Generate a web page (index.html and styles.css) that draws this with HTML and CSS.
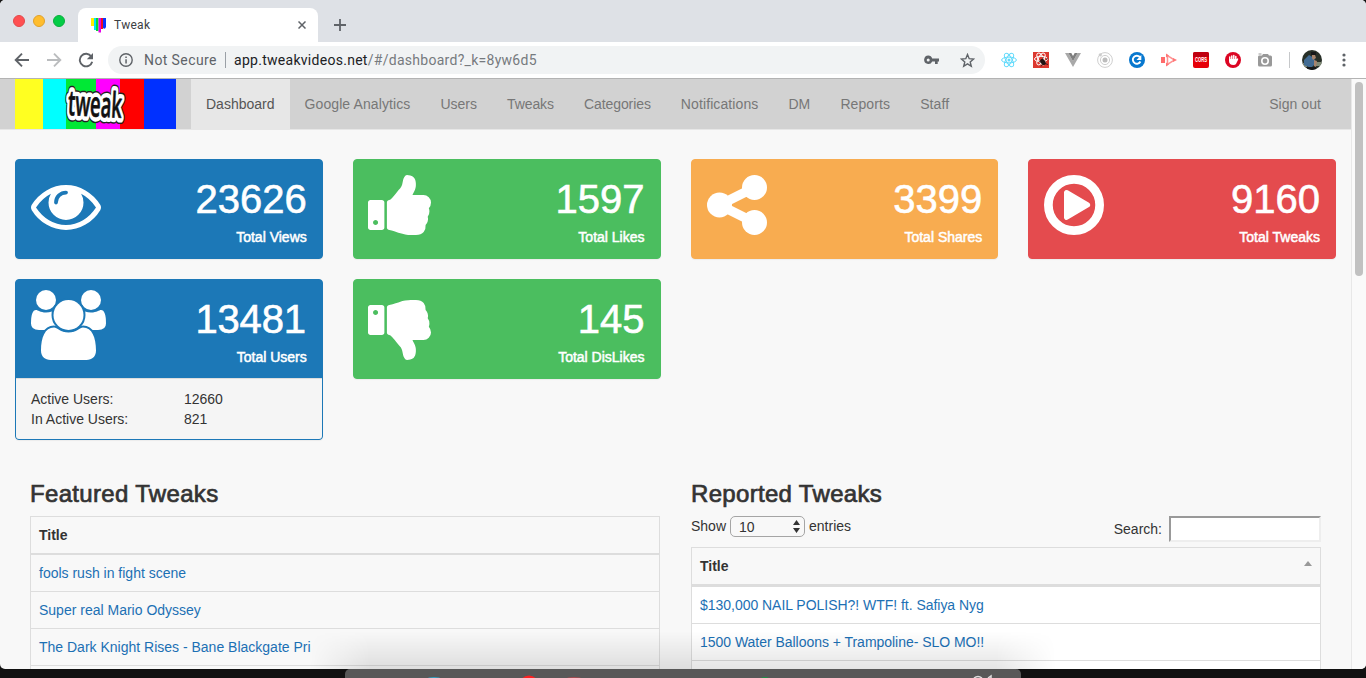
FILE: index.html
```html
<!DOCTYPE html>
<html lang="en">
<head>
<meta charset="utf-8">
<title>Tweak</title>
<link rel="stylesheet" href="styles.css">
</head>
<body>
<div class="window">
  <div class="tabstrip">
    <div class="lights"><i class="light red"></i><i class="light amber"></i><i class="light green"></i></div>
    <div class="tab">
      <svg class="favicon" width="15" height="15" viewBox="0 0 15 15"><path fill="#ffee00" d="M0 0h3v8H0z"/><path fill="#00dfff" d="M3 0h2v12H3z"/><path fill="#00d936" d="M5 0h2.500v13H5z"/><path fill="#e600e8" d="M7.500 0H10v14.500H7.500z"/><path fill="#f01020" d="M10 0h2v11h-2z"/><path fill="#0836ff" d="M12 0h3v9q-1 3-3 1z"/></svg>
      <span class="tab-title">Tweak</span>
      <svg class="tab-close" width="8" height="8" viewBox="0 0 8 8"><path d="M.5.500l7 7m0-7l-7 7" stroke="#5f6368" stroke-width="1.500"/></svg>
    </div>
    <svg class="newtab" width="12" height="12" viewBox="0 0 12 12"><path d="M6 0v12M0 6h12" stroke="#5f6368" stroke-width="1.800"/></svg>
  </div>
  <div class="toolbar">
    <svg class="nav-icon" width="16" height="16" viewBox="0 0 16 16" fill="none" stroke="#5f6368" stroke-width="1.900"><path d="M15 8H2.500M8 1.700L1.700 8 8 14.300"/></svg>
    <svg class="nav-icon" width="16" height="16" viewBox="0 0 16 16" fill="none" stroke="#babcbe" stroke-width="1.900"><path d="M1 8h12.500M8 1.700L14.300 8 8 14.300"/></svg>
    <svg class="nav-icon" width="16" height="16" viewBox="0 0 16 16"><path d="M13.300 4.500A6.300 6.300 0 1 0 14.200 9.700" fill="none" stroke="#5f6368" stroke-width="1.900"/><path d="M15 1v6.200H8.800z" fill="#5f6368"/></svg>
    <div class="omnibox">
      <svg width="14" height="14" viewBox="0 0 14 14"><circle cx="7" cy="7" r="6.200" fill="none" stroke="#5f6368" stroke-width="1.400"/><path d="M6.300 6.200h1.500v4.300H6.300zM6.300 3.500h1.500v1.500H6.300z" fill="#5f6368"/></svg>
      <span class="insecure">Not Secure</span>
      <i class="url-sep"></i>
      <span class="url"><b>app.tweakvideos.net</b>/#/dashboard?_k=8yw6d5</span>
      <svg class="key" width="15" height="10" viewBox="0 0 15 10"><path fill="#5f6368" fill-rule="evenodd" d="M4.200.600a4.100 4.100 0 0 1 4 2.900H15v3h-1.300V9H11V6.500H8.200A4.200 4.200 0 1 1 4.200.600zm0 2.800a1.500 1.500 0 1 0 0 3 1.500 1.500 0 0 0 0-3z"/></svg>
      <svg class="star" width="15" height="15" viewBox="0 0 15 15"><path d="M7.500 1.500l1.700 4.200 4.400.300-3.400 2.900 1.100 4.400-3.800-2.400-3.800 2.400 1.100-4.400L1.400 6l4.400-.300z" fill="none" stroke="#5f6368" stroke-width="1.400"/></svg>
    </div>
    <div class="extensions">
      <svg width="16" height="16" viewBox="0 0 16 16" fill="none" stroke="#61dafb"><ellipse cx="8" cy="8" rx="7.400" ry="2.900"/><ellipse cx="8" cy="8" rx="7.400" ry="2.900" transform="rotate(60 8 8)"/><ellipse cx="8" cy="8" rx="7.400" ry="2.900" transform="rotate(120 8 8)"/><circle cx="8" cy="8" r="1.500" fill="#61dafb" stroke="none"/></svg>
      <svg width="16" height="16" viewBox="0 0 16 16"><path fill="#dc382f" d="M0 0h16v16H0z"/><g fill="none" stroke="#fff"><ellipse cx="8" cy="7" rx="6.500" ry="2.700"/><ellipse cx="8" cy="7" rx="6.500" ry="2.700" transform="rotate(60 8 7)"/><ellipse cx="8" cy="7" rx="6.500" ry="2.700" transform="rotate(120 8 7)"/></g><ellipse cx="10" cy="10" rx="2.300" ry="3.500" fill="#231414" transform="rotate(-35 10 10)"/><path d="M6 9.500l4 1m-2 4l2-3m2 0l3 1m-2-5l2-1m-5 0l0-1.500" stroke="#231414" stroke-width=".8"/></svg>
      <svg width="16" height="16" viewBox="0 0 16 16"><path fill="#a9a9a9" d="M0 1h3.300L8 9.200 12.700 1H16L8 15z"/><path fill="#7f7f7f" d="M3.300 1h3L8 4l1.700-3h3L8 9.200z"/></svg>
      <svg width="16" height="16" viewBox="0 0 16 16" fill="none" stroke="#cfcfcf"><circle cx="8" cy="8" r="7.400"/><circle cx="8" cy="8" r="4.600"/><circle cx="8" cy="8" r="2.500" fill="#bdbdbd" stroke="none"/><circle cx="3.300" cy="2.800" r="1.600" fill="#ccc" stroke="none"/></svg>
      <svg width="16" height="16" viewBox="0 0 16 16"><circle cx="8" cy="8" r="8" fill="#0878cf"/><path d="M11.400 9.500A4 4 0 1 1 10.800 5" fill="none" stroke="#fff" stroke-width="1.900"/><path d="M12.300 3v5H7.500z" fill="#fff"/></svg>
      <svg width="16" height="16" viewBox="0 0 16 16"><path fill="#ff6b6b" d="M0 5h4v6H0z"/><path d="M6.500 8V3.500l7 4.500-7 4.500z" fill="none" stroke="#ff9292" stroke-width="1.500"/><path fill="#ff7777" d="M5 1.500l3 2-3 2zM5 10.500l3 2-3 2zM12 6l4 2-4 2z"/></svg>
      <svg class="cors-icon" width="16" height="16" viewBox="0 0 16 16"><rect width="16" height="16" rx="2" fill="#e60009"/><path d="M2 0h12a2 2 0 0 1 2 2v3H0V2a2 2 0 0 1 2-2z" fill="#bf0010"/><text x="2" y="10.300" class="cors" textLength="12" lengthAdjust="spacingAndGlyphs">CORS</text></svg>
      <svg width="16" height="16" viewBox="0 0 16 16"><circle cx="8" cy="8" r="8" fill="#dc0523"/><path d="M4.800 8V5m2-1v4m2-4.500V8m2-3.500V9" stroke="#fff" stroke-width="1.500" stroke-linecap="round"/><path fill="#fff" d="M4 7h7.500l1-.800q1.200 0 .600 1.500L11 12q-.700 1-2.500 1-4.500 0-4.500-4z"/></svg>
      <svg width="16" height="16" viewBox="0 0 16 16"><path fill="#999" fill-rule="evenodd" d="M2 3.500h3L6 2h5l1 1.500h1.500q1.500 0 1.500 1.500v8q0 1.500-1.500 1.500h-11Q1 14.500 1 13V5q0-1.500 1-1.500zM8 5a4 4 0 1 0 0 8 4 4 0 0 0 0-8zm0 1.600a2.400 2.400 0 1 1 0 4.800 2.400 2.400 0 0 1 0-4.800z"/><path fill="#999" d="M1.500 1.500h3v1h-3z"/></svg>
    </div>
    <i class="bar-sep"></i>
    <svg class="avatar" width="20" height="20" viewBox="0 0 20 20"><defs><clipPath id="face"><circle cx="10" cy="10" r="10"/></clipPath></defs><g clip-path="url(#face)"><path fill="#283028" d="M0 0h20v20H0z"/><path fill="#818b77" d="M12 12h8v4h-8zM0 13h5v4H0z"/><path fill="#416b93" d="M2 10l5-5 5 3 2 5-5 5-7-3z"/><path fill="#a8846c" d="M10 5h3l1 3-3 2-1-2zM12 10l3 1-1 6-2-1z"/><path fill="#17191a" d="M9 2h5v3H9zM5 17l9 0v3H5z"/></g></svg>
    <svg class="menu" width="4" height="14" viewBox="0 0 4 14" fill="#5f6368"><circle cx="2" cy="2" r="1.600"/><circle cx="2" cy="7" r="1.600"/><circle cx="2" cy="12" r="1.600"/></svg>
  </div>

  <div class="viewport">
    <div class="page">
      <nav class="navbar">
        <svg class="logo" width="161" height="50" viewBox="0 0 161 50">
          <path fill="#ffff21" d="M0 0h28v50H0z"/><path fill="#0ff" d="M28 0h23v50H28z"/><path fill="#00e835" d="M51 0h30v50H51z"/><path fill="#f0f" d="M81 0h24v50H81z"/><path fill="#f00" d="M105 0h24v50h-24z"/><path fill="#0030ff" d="M129 0h32v50h-32z"/>
          <g class="wordmark" transform="rotate(3 80 25)">
            <text class="mark-edge" x="53" y="37.500" textLength="54" lengthAdjust="spacingAndGlyphs">tweak</text>
            <text class="mark-halo" x="53" y="37.500" textLength="54" lengthAdjust="spacingAndGlyphs" aria-hidden="true">tweak</text>
            <text class="mark-ink" x="53" y="37.500" textLength="54" lengthAdjust="spacingAndGlyphs" aria-hidden="true">tweak</text>
          </g>
        </svg>
        <a class="nav-link active">Dashboard</a>
        <a class="nav-link loose">Google Analytics</a>
        <a class="nav-link">Users</a>
        <a class="nav-link tight">Tweaks</a>
        <a class="nav-link tight">Categories</a>
        <a class="nav-link loose">Notifications</a>
        <a class="nav-link loose">DM</a>
        <a class="nav-link loose">Reports</a>
        <a class="nav-link loose">Staff</a>
        <a class="nav-link signout">Sign out</a>
      </nav>

      <div class="cards">
        <section class="card blue"><div class="card-head">
          <svg class="icon-eye" width="70" height="45" viewBox="0 384 1792 1152"><path d="M1664 960q-152-236-381-353 61 104 61 225 0 185-131.500 316.500t-316.500 131.500-316.500-131.500-131.500-316.500q0-121 61-225-229 117-381 353 133 205 333.500 326.500t434.500 121.500 434.500-121.500 333.500-326.500zm-720-384q0-20-14-34t-34-14q-125 0-214.500 89.500t-89.500 214.500q0 20 14 34t34 14 34-14 14-34q0-86 61-147t147-61q20 0 34-14t14-34zm848 384q0 34-20 69-140 230-376.500 368.500t-499.500 138.500-499.500-139-376.500-368q-20-35-20-69t20-69q140-229 376.500-368t499.500-139 499.500 139 376.500 368q20 35 20 69z"/></svg>
          <div class="stat"><div class="num">23626</div><div class="label">Total Views</div></div>
        </div></section>
        <section class="card green"><div class="card-head">
          <svg class="icon-thumb" width="63" height="60" viewBox="64 128 1600 1536" preserveAspectRatio="none"><path id="thumb" d="M320 1344q0-26-19-45t-45-19q-27 0-45.500 19t-18.500 45q0 27 18.500 45.500t45.500 18.500q26 0 45-18.500t19-45.500zm160-512v640q0 26-19 45t-45 19h-288q-26 0-45-19t-19-45v-640q0-26 19-45t45-19h288q26 0 45 19t19 45zm1184 0q0 86-55 149 15 44 15 76 3 76-43 137 17 56 0 117-15 57-54 94 9 112-49 181-64 76-197 78h-129q-66 0-144-15.500t-121.500-29-120.500-39.500q-123-43-158-44-26-1-45-19.500t-19-44.500v-641q0-25 18-43.500t43-20.500q24-2 76-59t101-121q68-87 101-120 18-18 31-48t17.500-48.500 13.500-60.500q7-39 12.500-61t19.500-52 34-50q19-19 45-19 46 0 82.500 10.500t60 26 40 40.500 24 45 12 50 5 45 .500 39q0 38-9.500 76t-19 60-27.500 56q-3 6-10 18t-11 22-8 24h277q78 0 135 57t57 135z"/></svg>
          <div class="stat"><div class="num">1597</div><div class="label">Total Likes</div></div>
        </div></section>
        <section class="card orange"><div class="card-head">
          <svg class="icon-plain" width="60" height="60" viewBox="0 0 60 60"><path d="M47.500 12.500l-35 17.500 35 17.500" fill="none" stroke="#fff" stroke-width="9.500"/><circle cx="47.500" cy="12.500" r="12.500"/><circle cx="12.500" cy="30" r="12.500"/><circle cx="47.500" cy="47.500" r="12.500"/></svg>
          <div class="stat"><div class="num">3399</div><div class="label">Total Shares</div></div>
        </div></section>
        <section class="card crimson"><div class="card-head">
          <svg class="icon-plain" width="60" height="60" viewBox="0 128 1536 1536"><path d="M1184 895q0 37-32 55l-544 320q-15 9-32 9-16 0-32-8-32-19-32-56v-640q0-37 32-56 33-18 64 1l544 320q32 18 32 55z"/><circle cx="768" cy="896" r="656" fill="none" stroke="#fff" stroke-width="224"/></svg>
          <div class="stat"><div class="num">9160</div><div class="label">Total Tweaks</div></div>
        </div></section>
        <section class="card blue detailed"><div class="card-head">
          <svg class="icon-users" width="75" height="70" viewBox="0 0 75 70"><circle cx="15" cy="10" r="10"/><circle cx="60" cy="10" r="10"/><path d="M5 20c2 0 4 2.500 10 2.500q3 0 6-1L26 34v6H8Q0 40 0 33.500 0 20 5 20zM70 20c-2 0-4 2.500-10 2.500q-3 0-6-1L49 34v6h18q8 0 8-6.500Q75 20 70 20z"/><path class="gap" d="M23 37.500c3 0 6.500 5 14.500 5s11.500-5 14.500-5c9 0 13 10 13 23 0 6-4 9.500-9.500 9.500h-36C14 70 10 66.500 10 60.500c0-13 4-23 13-23z"/><circle class="gap" cx="37.500" cy="25" r="15"/></svg>
          <div class="stat"><div class="num ends-in-one">13481</div><div class="label">Total Users</div></div>
        </div>
        <dl class="card-body"><dt>Active Users:</dt><dd>12660</dd><dt>In Active Users:</dt><dd>821</dd></dl></section>
        <section class="card green"><div class="card-head">
          <svg class="icon-thumb down" width="63" height="60" viewBox="64 128 1600 1536" preserveAspectRatio="none"><use href="#thumb"/></svg>
          <div class="stat"><div class="num">145</div><div class="label">Total DisLikes</div></div>
        </div></section>
      </div>

      <div class="tables">
        <section class="panel">
          <h3>Featured Tweaks</h3>
          <div class="grid">
            <div class="th">Title</div>
            <a class="td">fools rush in fight scene</a>
            <a class="td">Super real Mario Odyssey</a>
            <a class="td">The Dark Knight Rises - Bane Blackgate Pri</a>
            <a class="td"></a>
          </div>
        </section>
        <section class="panel">
          <h3>Reported Tweaks</h3>
          <div class="controls">
            <div class="length">Show <span class="select">10<svg width="7" height="13" viewBox="0 0 7 13"><path fill="#333" d="M3.500 0L7 5H0zM3.500 13L0 8h7z"/></svg></span> entries</div>
            <label class="search">Search: <input type="text"></label>
          </div>
          <div class="grid striped">
            <div class="th">Title<i class="sort"></i></div>
            <a class="td">$130,000 NAIL POLISH?! WTF! ft. Safiya Nyg</a>
            <a class="td">1500 Water Balloons + Trampoline- SLO MO!!</a>
            <a class="td"></a>
          </div>
        </section>
      </div>
    </div>
    <div class="scrollbar"><i class="thumb"></i></div>
  </div>
  <div class="dock-shade"></div>
</div>
<div class="desktop"><div class="dock">
  <svg width="676" height="9" viewBox="0 0 676 9"><ellipse cx="89" cy="10" rx="7" ry="2" fill="#309fc2"/><circle cx="184" cy="16.500" r="10" fill="#ff2020"/><ellipse cx="229" cy="10" rx="8" ry="2" fill="#a64b50"/><ellipse cx="420" cy="10" rx="4" ry="2" fill="#169344"/><path d="M629 9q4-3 8 0m6 0l3-2v2" stroke="#ddd" stroke-width="1.500" fill="none"/></svg>
</div></div>
</body>
</html>
```
FILE: styles.css
```css
* { box-sizing: border-box; }
body {
  margin: 0; width: 1366px; height: 678px; overflow: hidden;
  background: #141414; color: #333;
  font: 14px/20px "Liberation Sans", Arial, sans-serif;
}
svg { display: block; flex: none; }
.window {
  position: relative; height: 669px; overflow: hidden;
  display: flex; flex-direction: column;
  background: #f8f8f8; border-radius: 5px;
}

/* browser chrome */
.tabstrip { height: 42px; flex: none; display: flex; background: #dee1e6; }
.lights { display: flex; gap: 8px; padding: 15px 0 0 13px; width: 78px; }
.light { width: 12px; height: 12px; border-radius: 50%; }
.red { background: #ff5052; border: 1px solid #e2494b; }
.amber { background: #ffbd2e; border: 1px solid #e0a12c; }
.green.light { background: #04cc46; border: 1px solid #0bae3d; }
.tab {
  width: 240px; height: 34px; margin-top: 8px; padding: 0 12px 0 13px;
  display: flex; align-items: center; background: #fff;
  border-radius: 8px 8px 0 0; color: #3c4043;
}
.tab-title { flex: 1; padding-left: 8px; font: 12px/16px Roboto, sans-serif; letter-spacing: .3px; }
.newtab { margin: 19px 0 0 16px; }
.toolbar {
  height: 37px; flex: none; display: flex; align-items: center;
  padding: 0 20px 0 14px; background: #fff; border-bottom: 1px solid #b3b3b3;
  font: 14px/20px Roboto, sans-serif; color: #5f6368;
}
.nav-icon { margin-right: 16px; }
.nav-icon:nth-child(3) { margin-right: 14px; }
.omnibox {
  width: 877px; height: 28px; padding: 0 10px 0 11px; border-radius: 14px;
  display: flex; align-items: center; background: #f1f3f4;
}
.insecure { padding-left: 11px; width: 84px; letter-spacing: .4px; white-space: nowrap; }
.url-sep { width: 1px; height: 16px; margin: 0 8px; background: #9aa0a6; }
.url { flex: 1; letter-spacing: .28px; color: #767a7e; }
.url b { font-weight: 400; color: #202124; }
.key { margin-right: 21px; }
.extensions { display: flex; gap: 16px; margin-left: 16px; }
.cors-icon { overflow: visible; }
.cors { font: bold 6.500px "Liberation Sans", sans-serif; fill: #fff; }
.bar-sep { width: 1px; height: 16px; margin: 0 12px 0 16px; background: #c6c8ca; }
.menu { margin-left: 20px; }

/* page */
.viewport { flex: 1; min-height: 0; display: flex; }
.page { width: 1351px; overflow: hidden; }
.scrollbar { width: 15px; padding: 3px 0 0 3px; background: #fafafa; border-left: 1px solid #e8e8e8; }
.thumb { display: block; width: 8px; height: 194px; border-radius: 4px; background: #c1c1c1; }
.navbar {
  height: 51px; display: flex; padding: 0 15px; background: #d2d2d2;
  border-bottom: 1px solid #e7e7e7;
}
.logo { margin-right: 15px; }
.wordmark { font: 600 35px "Open Sans", sans-serif; stroke-linejoin: round; }
.mark-edge { stroke: #222; stroke-width: 12.500px; }
.mark-halo { fill: #fff; stroke: #fff; stroke-width: 9.500px; }
.mark-ink { fill: #111; stroke: #111; stroke-width: .7px; }
.nav-link { height: 50px; padding: 15px; color: #777; }
.nav-link.active { background: #e7e7e7; color: #555; }
.nav-link.loose { letter-spacing: .1px; }
.nav-link.tight { letter-spacing: -.08px; }
.nav-link.signout { margin-left: auto; letter-spacing: .06px; }

.cards {
  display: grid; grid-template-columns: repeat(4, 1fr); gap: 20px 30px;
  align-items: start; padding: 29px 15px 0;
}
.card { border-radius: 4px; overflow: hidden; border: 1px solid; box-shadow: 0 1px 1px rgba(0,0,0,.05); }
.blue { border-color: #1c78b7; background: #1c78b7; }
.green.card { border-color: #4bbe5f; background: #4bbe5f; }
.orange { border-color: #f8ac50; background: #f8ac50; }
.crimson { border-color: #e44b4e; background: #e44b4e; }
.card-head { height: 98px; display: flex; padding: 10px 15px; color: #fff; fill: #fff; }
.icon-eye { margin-top: 15px; }
.icon-plain { margin-top: 5px; }
.icon-thumb { margin: 5px 0 0 -1px; }
.icon-thumb.down { margin-top: 10px; transform: scaleY(-1); }
.gap { stroke: #1c78b7; stroke-width: 4px; paint-order: stroke; }
.stat { flex: 1; text-align: right; }
.num { padding-top: 2px; font-size: 40px; line-height: 55px; -webkit-text-stroke: .6px #fff; }
.num.ends-in-one { padding-right: 1px; letter-spacing: -.2px; }
.label { -webkit-text-stroke: .5px #fff; }
.card-body {
  display: grid; grid-template-columns: 1fr 1fr; margin: 0; padding: 10px 15px;
  border-top: 1px solid #ddd; background: #f5f5f5;
}
.card-body dd { margin: 0; padding-left: 15px; }

.tables { display: flex; justify-content: space-between; padding: 39px 30px 0; }
.panel { width: 630px; }
h3 {
  margin: 0 0 7px; font-size: 24px; line-height: 30px; font-weight: 400;
  letter-spacing: .32px; -webkit-text-stroke: .7px #333;
}
.grid { border: 1px solid #ddd; }
.th { position: relative; height: 38px; padding: 8px; border-bottom: 2px solid #ddd; font-weight: 700; }
.td { display: block; height: 37px; padding: 8px; border-bottom: 1px solid #ddd; color: #1c70b4; }
.striped .th { height: 39px; border-bottom-width: 3px; }
.striped .td { background: #fff; letter-spacing: -.03px; }
.controls { height: 31px; display: flex; justify-content: space-between; align-items: flex-start; }
.length { display: flex; gap: 4px; }
.select {
  width: 75px; height: 21px; padding: 0 4px 0 8px; display: flex;
  justify-content: space-between; align-items: center;
  border: 1px solid #a5a5a5; border-radius: 5px;
}
.search { display: flex; align-items: center; gap: 7px; }
.search input { width: 152px; height: 26px; border: 2px solid; border-color: #999 #eee #eee #999; background: #fff; }
.sort {
  position: absolute; right: 8px; top: 13px;
  border: 4.500px solid transparent; border-top: 0; border-bottom: 5px solid #999;
}
.dock-shade {
  position: absolute; left: 310px; width: 746px; bottom: 0; height: 38px; pointer-events: none;
  background: linear-gradient(transparent, rgba(0,0,0,.1));
  mask-image: linear-gradient(90deg, transparent, #000 60px, #000 686px, transparent);
}
.desktop { height: 9px; display: flex; padding-left: 345px; background: #111; }
.dock { width: 676px; height: 9px; background: #585858; border-radius: 5px 5px 0 0; }
```
